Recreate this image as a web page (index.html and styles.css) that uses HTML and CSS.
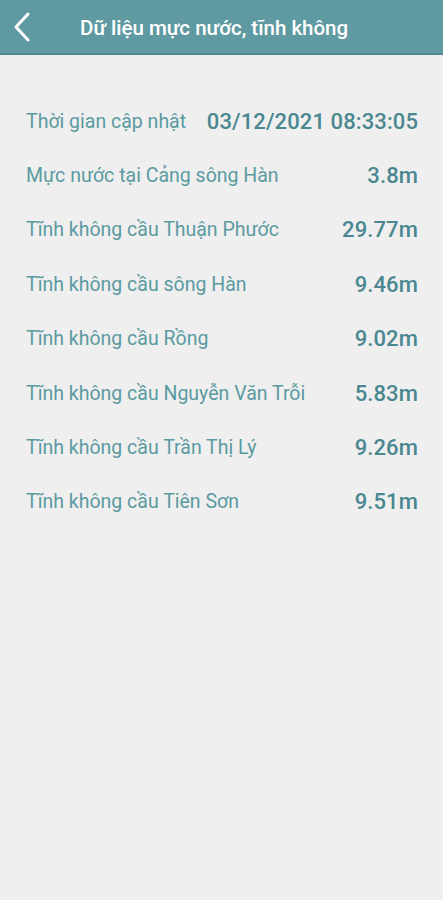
FILE: index.html
```html
<!DOCTYPE html>
<html lang="vi">
<head>
<meta charset="utf-8">
<link rel="stylesheet" href="styles.css">
</head>
<body>
<header class="bar">
  <svg class="back" width="18" height="30" viewBox="0 0 18 30"><path d="M15 2 L3 15 L15 28" fill="none" stroke="#fff" stroke-width="3" stroke-linecap="round" stroke-linejoin="round"/></svg>
  <h1 class="title">Dữ liệu mực nước, tĩnh không</h1>
</header>
<main class="list">
  <div class="row"><span class="label">Thời gian cập nhật</span><span class="value">03/12/2021 08:33:05</span></div>
  <div class="row"><span class="label">Mực nước tại Cảng sông Hàn</span><span class="value">3.8m</span></div>
  <div class="row"><span class="label">Tĩnh không cầu Thuận Phước</span><span class="value">29.77m</span></div>
  <div class="row"><span class="label">Tĩnh không cầu sông Hàn</span><span class="value">9.46m</span></div>
  <div class="row"><span class="label">Tĩnh không cầu Rồng</span><span class="value">9.02m</span></div>
  <div class="row"><span class="label">Tĩnh không cầu Nguyễn Văn Trỗi</span><span class="value">5.83m</span></div>
  <div class="row"><span class="label">Tĩnh không cầu Trần Thị Lý</span><span class="value">9.26m</span></div>
  <div class="row"><span class="label">Tĩnh không cầu Tiên Sơn</span><span class="value">9.51m</span></div>
</main>
</body>
</html>
```
FILE: styles.css
```css
html, body {
  margin: 0;
  padding: 0;
  background: #efefef;
  font-family: Roboto, "Noto Sans", sans-serif;
  height: 100%;
}
.bar {
  height: 53px;
  background: #5f9aa2;
  border-bottom: 2px solid #4f8a92;
  display: flex;
  align-items: center;
  padding-left: 13px;
  box-sizing: content-box;
}
.back {
  display: block;
  margin-top: 1px;
}
.title {
  margin: 2px 0 0 49px;
  color: #fff;
  font-size: 20.5px;
  font-weight: 500;
}
.list {
  padding: 39px 25px 0 26px;
  display: flex;
  flex-direction: column;
}
.row {
  height: 54.4px;
  display: flex;
  align-items: center;
  justify-content: space-between;
}
.label {
  color: #5b9aa1;
  font-size: 19.5px;
}
.value {
  color: #4a8790;
  font-size: 22px;
  font-weight: 500;
  letter-spacing: 0.1px;
}
```
